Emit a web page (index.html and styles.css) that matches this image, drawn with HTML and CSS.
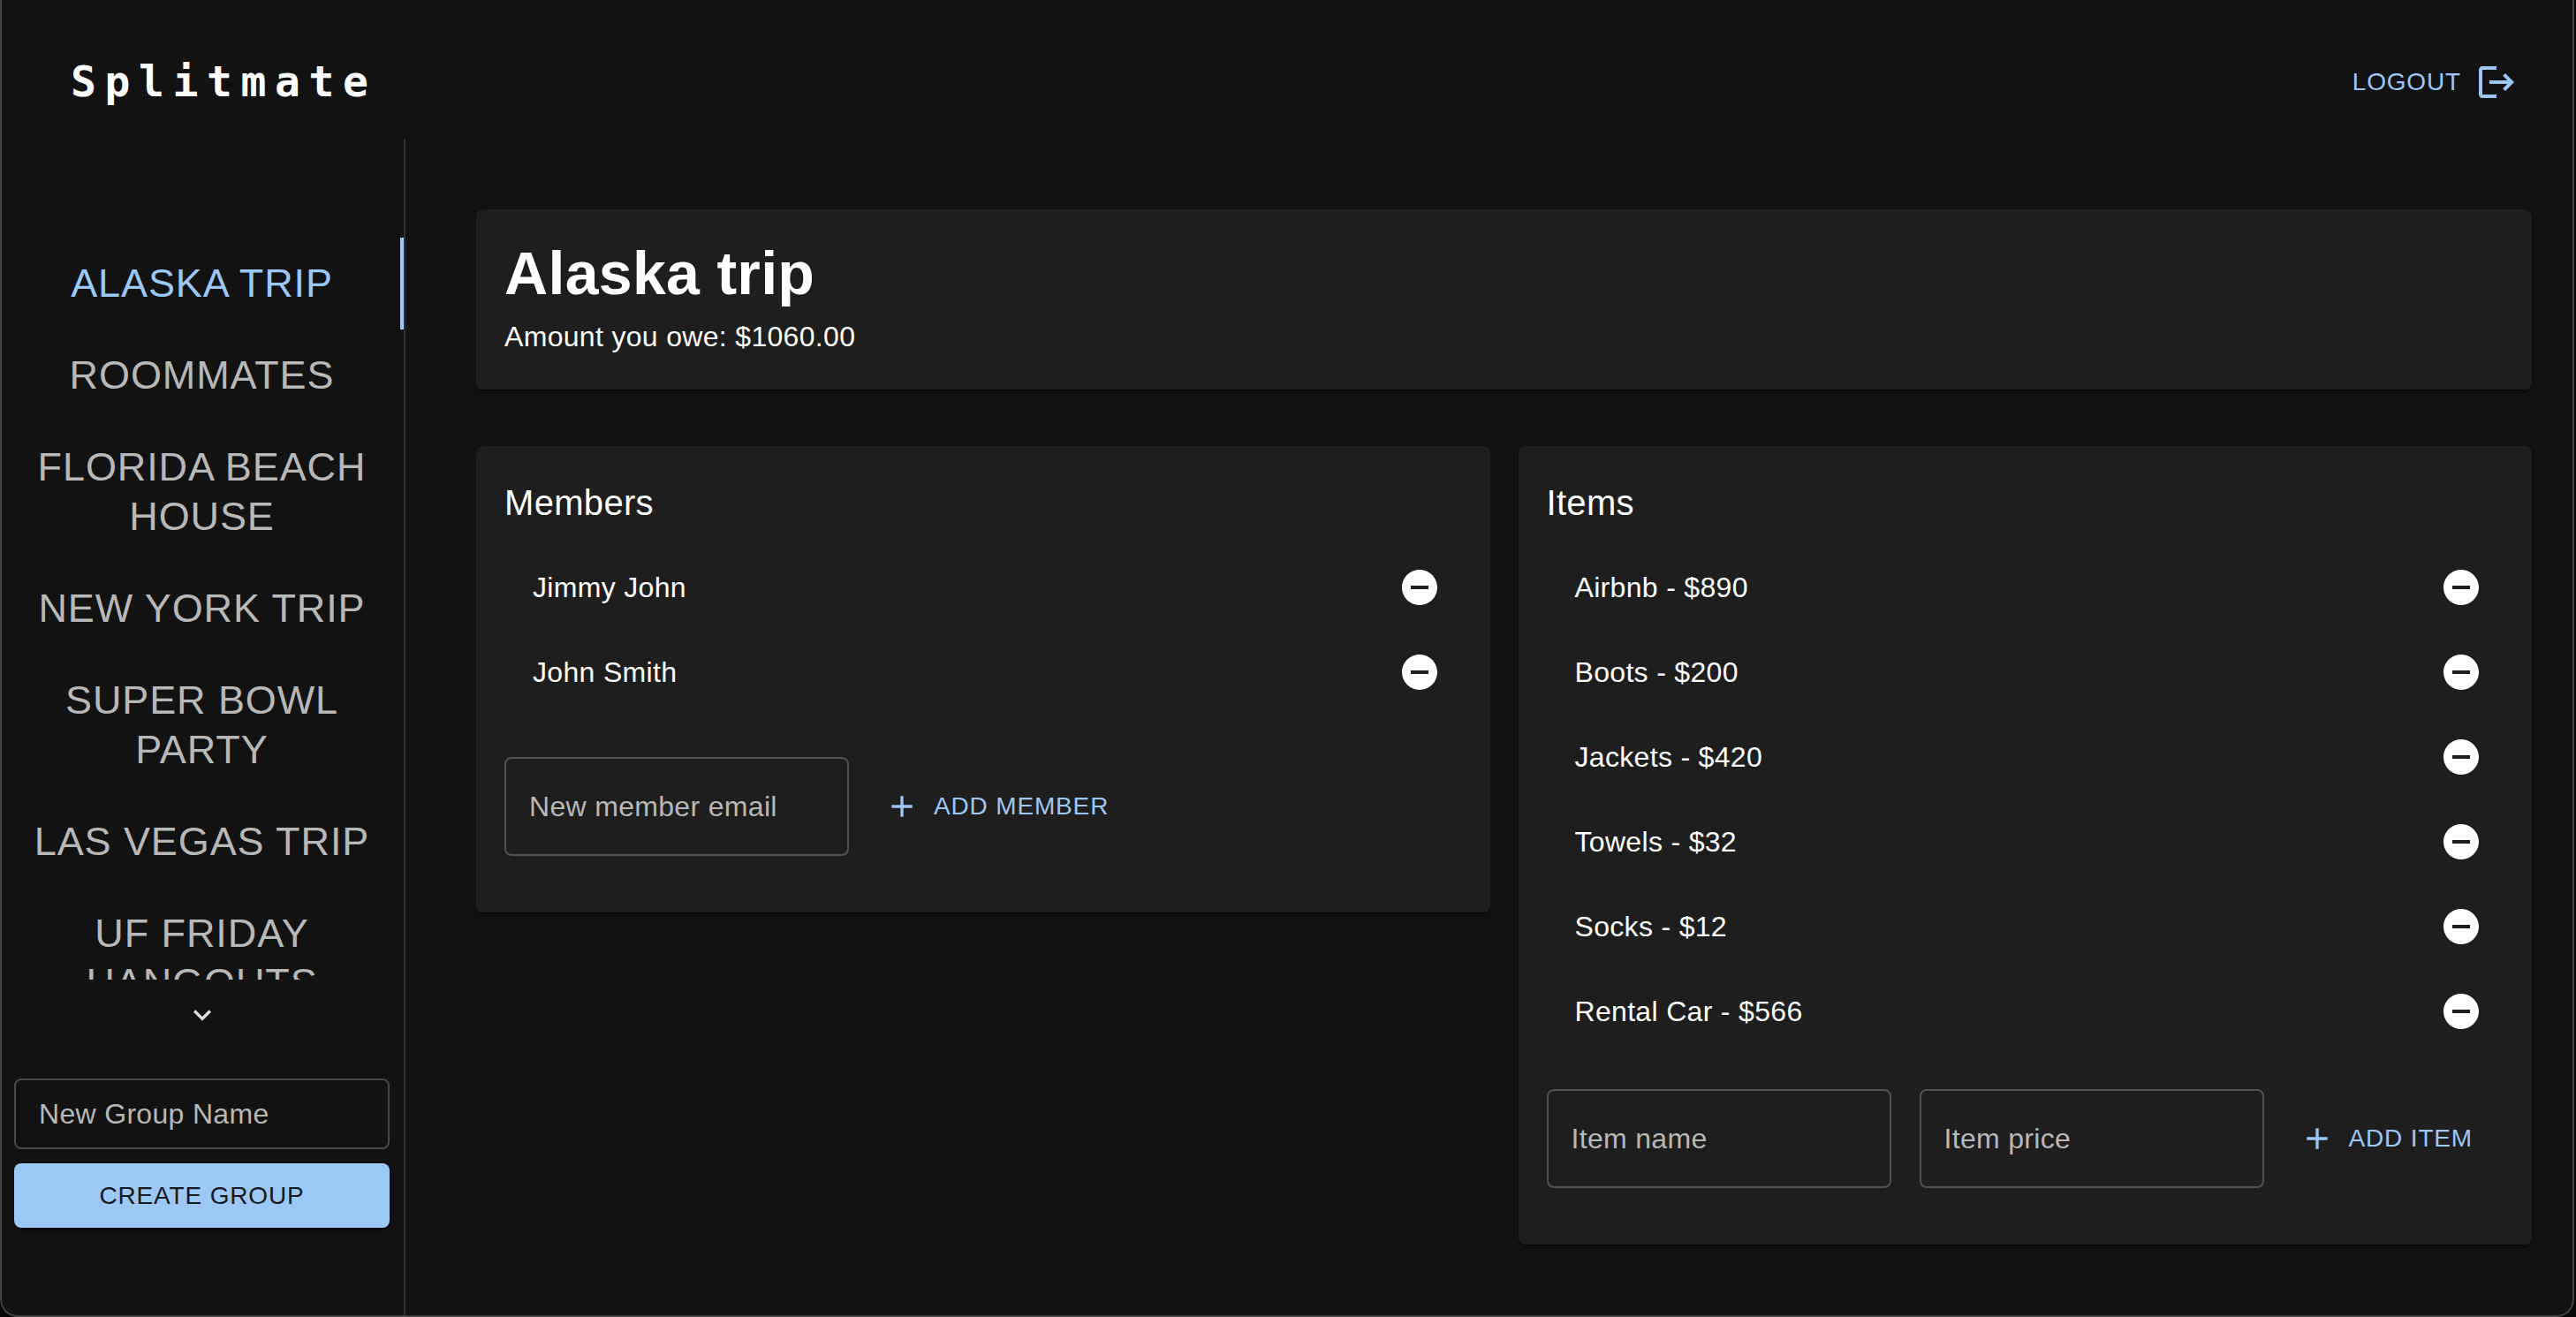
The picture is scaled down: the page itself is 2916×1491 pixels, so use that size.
FILE: index.html
```html
<!DOCTYPE html>
<html lang="en">
<head>
  <meta charset="utf-8">
  <meta name="viewport" content="width=device-width, initial-scale=1">
  <title>Splitmate</title>
  <link rel="stylesheet" href="styles.css">
</head>
<body>
  <svg class="sprite" aria-hidden="true">
    <symbol id="icon-remove" viewBox="0 0 24 24">
      <path d="M12 2C6.480 2 2 6.480 2 12s4.480 10 10 10 10-4.480 10-10S17.520 2 12 2zm5 11H7v-2h10v2z"/>
    </symbol>
    <symbol id="icon-add" viewBox="0 0 24 24">
      <path d="M19 13h-6v6h-2v-6H5v-2h6V5h2v6h6v2z"/>
    </symbol>
    <symbol id="icon-down" viewBox="0 0 24 24">
      <path d="M7.410 8.590 12 13.170l4.590-4.580L18 10l-6 6-6-6 1.410-1.410z"/>
    </symbol>
    <symbol id="icon-logout" viewBox="0 0 24 24">
      <path d="m17 7-1.410 1.410L18.170 11H8v2h10.170l-2.580 2.580L17 17l5-5zM4 5h8V3H4c-1.100 0-2 .9-2 2v14c0 1.100.9 2 2 2h8v-2H4V5z"/>
    </symbol>
  </svg>

  <div class="window">
    <header class="topbar">
      <a class="brand" href="#">Splitmate</a>
      <button class="link-button logout" type="button">Logout
        <svg class="icon" aria-hidden="true"><use href="#icon-logout"/></svg>
      </button>
    </header>

    <div class="layout">
      <aside class="sidebar">
        <div class="tabs" role="tablist" aria-label="Groups" aria-orientation="vertical">
          <button class="tab tab-selected" type="button" role="tab" aria-selected="true">Alaska trip</button>
          <button class="tab" type="button" role="tab" aria-selected="false">Roommates</button>
          <button class="tab" type="button" role="tab" aria-selected="false">Florida Beach House</button>
          <button class="tab" type="button" role="tab" aria-selected="false">New York Trip</button>
          <button class="tab" type="button" role="tab" aria-selected="false">Super Bowl Party</button>
          <button class="tab" type="button" role="tab" aria-selected="false">Las Vegas Trip</button>
          <button class="tab" type="button" role="tab" aria-selected="false">UF Friday Hangouts</button>
        </div>
        <button class="scroll-button" type="button" aria-label="Scroll groups down">
          <svg class="icon icon-small" aria-hidden="true"><use href="#icon-down"/></svg>
        </button>
        <form class="group-form">
          <input class="field field-compact" type="text" placeholder="New Group Name" aria-label="New Group Name">
          <button class="primary-button" type="button">Create group</button>
        </form>
      </aside>

      <main class="content">
        <section class="card">
          <h1 class="group-title">Alaska trip</h1>
          <p class="group-owed">Amount you owe: $1060.00</p>
        </section>

        <div class="panels">
          <section class="card panel">
            <h2 class="panel-title">Members</h2>
            <ul class="rows">
              <li class="row">Jimmy John
                <button class="remove" type="button" aria-label="Remove Jimmy John"><svg class="icon" aria-hidden="true"><use href="#icon-remove"/></svg></button></li>
              <li class="row">John Smith
                <button class="remove" type="button" aria-label="Remove John Smith"><svg class="icon" aria-hidden="true"><use href="#icon-remove"/></svg></button></li>
            </ul>
            <form class="add-form add-form-member">
              <input class="field" type="email" placeholder="New member email" aria-label="New member email">
              <button class="link-button" type="button"><svg class="icon icon-small" aria-hidden="true"><use href="#icon-add"/></svg>Add member</button>
            </form>
          </section>

          <section class="card panel">
            <h2 class="panel-title">Items</h2>
            <ul class="rows">
              <li class="row">Airbnb - $890
                <button class="remove" type="button" aria-label="Remove Airbnb"><svg class="icon" aria-hidden="true"><use href="#icon-remove"/></svg></button></li>
              <li class="row">Boots - $200
                <button class="remove" type="button" aria-label="Remove Boots"><svg class="icon" aria-hidden="true"><use href="#icon-remove"/></svg></button></li>
              <li class="row">Jackets - $420
                <button class="remove" type="button" aria-label="Remove Jackets"><svg class="icon" aria-hidden="true"><use href="#icon-remove"/></svg></button></li>
              <li class="row">Towels - $32
                <button class="remove" type="button" aria-label="Remove Towels"><svg class="icon" aria-hidden="true"><use href="#icon-remove"/></svg></button></li>
              <li class="row">Socks - $12
                <button class="remove" type="button" aria-label="Remove Socks"><svg class="icon" aria-hidden="true"><use href="#icon-remove"/></svg></button></li>
              <li class="row">Rental Car - $566
                <button class="remove" type="button" aria-label="Remove Rental Car"><svg class="icon" aria-hidden="true"><use href="#icon-remove"/></svg></button></li>
            </ul>
            <form class="add-form">
              <input class="field" type="text" placeholder="Item name" aria-label="Item name">
              <input class="field" type="text" placeholder="Item price" aria-label="Item price">
              <button class="link-button" type="button"><svg class="icon icon-small" aria-hidden="true"><use href="#icon-add"/></svg>Add item</button>
            </form>
          </section>
        </div>
      </main>
    </div>
  </div>
</body>
</html>
```

FILE: styles.css
```css
:root {
  --page: #121212;
  --surface: #1e1e1e;
  --accent: #9cc8f5;
  --muted: #b8b8b8;
  --outline: rgba(255, 255, 255, 0.23);
  --shadow: 0 4px 2px -2px rgba(0, 0, 0, 0.2), 0 2px 2px rgba(0, 0, 0, 0.14), 0 2px 6px rgba(0, 0, 0, 0.12);
}

*,
*::before,
*::after {
  box-sizing: border-box;
}

body {
  margin: 0;
  padding-right: 2px;
  background: #050505;
  color: #fff;
  font-family: "Liberation Sans", Arial, Helvetica, sans-serif;
  font-size: 32px;
  line-height: 48px;
  letter-spacing: 0.01em;
}

button,
input {
  font: inherit;
  letter-spacing: inherit;
  color: inherit;
}

button {
  border: 0;
  background: none;
  cursor: pointer;
}

h1,
h2,
p,
ul {
  margin: 0;
  padding: 0;
}

.sprite {
  display: none;
}

.icon {
  width: 48px;
  height: 48px;
  flex: none;
  display: block;
  fill: currentColor;
}

.icon-small {
  width: 40px;
  height: 40px;
}

/* Application window */

.window {
  position: relative;
  display: flex;
  flex-direction: column;
  height: 100vh;
  overflow: hidden;
  background: var(--page);
  border-radius: 0 0 20px 20px;
}

/* Outline drawn over the window's edge */
.window::after {
  content: "";
  position: absolute;
  inset: 0;
  border: 2px solid #444;
  border-top: 0;
  border-radius: inherit;
  pointer-events: none;
}

.topbar {
  display: flex;
  align-items: center;
  justify-content: space-between;
  padding: 64px 48px 36px 80px;
}

.brand {
  color: #fff;
  font-family: "DejaVu Sans Mono", Menlo, monospace;
  font-size: 48px;
  font-weight: 700;
  line-height: 57px;
  letter-spacing: 0.2em;
  text-decoration: none;
}

.link-button {
  display: flex;
  align-items: center;
  gap: 16px;
  padding: 12px 8px;
  color: var(--accent);
  font-size: 28px;
  line-height: 48px;
  letter-spacing: 0.03em;
  text-transform: uppercase;
  white-space: nowrap;
}

.logout {
  padding: 0 16px;
}

.layout {
  flex: 1;
  min-height: 0;
  display: flex;
}

/* Group list */

.sidebar {
  flex: none;
  width: 459px;
  display: flex;
  flex-direction: column;
  padding: 112px 0 101px;
  border-right: 2px solid #313131;
}

.tabs {
  flex: 1;
  min-height: 0;
  overflow: hidden;
}

.tab {
  display: block;
  width: 100%;
  padding: 24px 28px;
  border-right: 4px solid transparent;
  border-left: 4px solid transparent;
  color: var(--muted);
  font-size: 45px;
  line-height: 56px;
  letter-spacing: 0.02em;
  text-align: center;
  text-transform: uppercase;
}

.tab-selected {
  border-right-color: var(--accent);
  color: var(--accent);
}

.scroll-button {
  display: flex;
  justify-content: center;
  padding: 20px;
  color: #ddd;
}

.group-form {
  display: flex;
  flex-direction: column;
  gap: 16px;
  padding: 32px 16px 0;
}

.field {
  width: 390px;
  min-width: 0;
  height: 112px;
  padding: 0 26px;
  border: 2px solid var(--outline);
  border-radius: 8px;
  background: transparent;
}

.field-compact {
  width: 100%;
  height: 80px;
}

.field::placeholder {
  color: var(--muted);
  opacity: 1;
}

.primary-button {
  padding: 12px 32px;
  border-radius: 8px;
  background: var(--accent);
  box-shadow: var(--shadow);
  color: #16191d;
  font-size: 28px;
  line-height: 49px;
  letter-spacing: 0.03em;
  text-transform: uppercase;
}

/* Selected group */

.content {
  flex: 1;
  min-width: 0;
  overflow-y: auto;
  display: flex;
  flex-direction: column;
  gap: 64px;
  padding: 80px 48px 48px 80px;
}

.card {
  padding: 32px;
  border-radius: 8px;
  background: var(--surface);
  box-shadow: var(--shadow);
}

.group-title {
  margin-bottom: 4px;
  font-size: 68px;
  font-weight: 700;
  line-height: 80px;
}

.group-owed {
  line-height: 56px;
}

.panels {
  display: grid;
  grid-template-columns: 1fr 1fr;
  align-items: start;
  gap: 32px;
}

.panel {
  padding-bottom: 64px;
}

.panel-title {
  margin-bottom: 16px;
  font-size: 40px;
  font-weight: 400;
  line-height: 64px;
}

.rows {
  list-style: none;
}

.row {
  display: flex;
  align-items: center;
  justify-content: space-between;
  padding: 16px 16px 16px 32px;
}

.remove {
  padding: 8px;
  border-radius: 50%;
}

.add-form {
  display: flex;
  align-items: center;
  gap: 32px;
  margin-top: 40px;
}

.add-form-member {
  margin-top: 48px;
}
```
